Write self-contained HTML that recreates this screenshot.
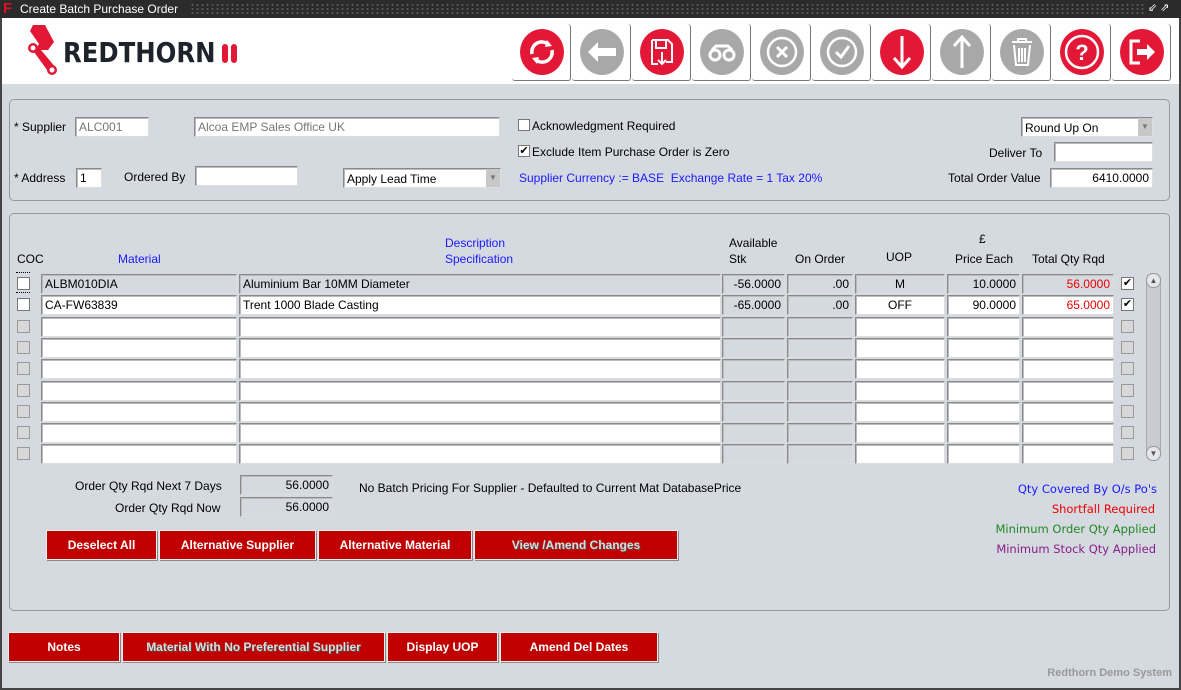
<!DOCTYPE html>
<html><head><meta charset="utf-8"><style>
*{box-sizing:border-box;margin:0;padding:0}
body{width:1181px;height:690px;overflow:hidden;background:#d5d9e0;font-family:"Liberation Sans",Arial,sans-serif;font-size:12px;color:#000;position:relative}
.a{position:absolute}
.f{position:absolute;height:20px;border:1px solid #8a8a8a;border-right-color:#ddd;border-bottom-color:#ddd;box-shadow:inset 1px 1px 0 #bbb;background:#fff;padding:2px 3px;white-space:nowrap;overflow:hidden;font-size:12px}
.g{background:#d5d9e0}
.r{text-align:right}
.c{text-align:center}
.lbl{position:absolute;font-size:12px;white-space:nowrap}
.blue{color:#1a1aff}
.cb{position:absolute;width:13px;height:13px;border:1px solid #777;background:#fff}
.cbg{background:#d8d8d8;border-color:#999}
.btn{position:absolute;height:30px;background:#c00000;color:#fff;font-weight:bold;font-size:12px;text-align:center;line-height:28px;border:1px solid #eee;box-shadow:1px 1px 0 #888}
.btn.s{color:#ddd;text-shadow:1px 1px 0 #555}
.panel{position:absolute;border:1px solid #999;border-radius:5px}
.tb{position:absolute;top:24px;width:59px;height:57px;border-right:1px solid #777;border-bottom:1px solid #777;border-radius:3px}
.tb svg{position:absolute;left:6px;top:4px}
.leg{font-family:"DejaVu Sans",sans-serif;font-size:11.5px}
</style></head><body>
<div class="a" style="left:0;top:0;width:1181px;height:18px;background:#2b2b2b"></div>
<div class="a" style="left:190px;top:3px;width:955px;height:12px;background-image:radial-gradient(#777 0.8px,transparent 1px);background-size:5px 4px"></div>
<div class="lbl" style="left:3px;top:0;color:#e0102a;font-size:15px;font-weight:bold;line-height:18px">F</div>
<div class="lbl" style="left:20px;top:2px;color:#fff;font-size:12px">Create Batch Purchase Order</div>
<div class="lbl" style="left:1148px;top:1px;color:#fff;font-size:11px">⇙ ⇗</div>
<div class="a" style="left:0;top:18px;width:2px;height:672px;background:#444"></div>
<div class="a" style="left:1179px;top:18px;width:2px;height:672px;background:#444"></div>
<div class="a" style="left:0;top:688px;width:1181px;height:2px;background:#444"></div>
<div class="a" style="left:2px;top:18px;width:1177px;height:66px;background:#fff"></div>
<svg class="a" style="left:26px;top:22px" width="40" height="56" viewBox="0 0 40 56"><path d="M7 3 L19 3 L28 20 L22 28 L15 28 L30 46 L24 52 L8 30 L13 22 L4 9Z" fill="#e31837"/><circle cx="7" cy="26" r="5" fill="#e31837"/><circle cx="7" cy="26" r="2.5" fill="#fff"/><circle cx="26" cy="48" r="5" fill="#e31837"/><circle cx="26" cy="48" r="2.5" fill="#fff"/></svg>
<div class="lbl" style="left:63px;top:36px;font-size:28px;font-weight:bold;color:#1e222a;font-family:'DejaVu Sans',sans-serif;transform:scaleX(0.87);transform-origin:left">REDTHORN</div>
<div class="a" style="left:222px;top:44px;width:6px;height:19px;background:#e31837;border-radius:3px"></div>
<div class="a" style="left:231px;top:44px;width:6px;height:19px;background:#e31837;border-radius:3px"></div>

<div class="tb" style="left:512px"><svg width="48" height="48" viewBox="0 0 48 48"><ellipse cx="24" cy="24" rx="22" ry="23" fill="#e31837"/><path d="M14 26a10 10 0 0 1 17-9M34 22a10 10 0 0 1-17 9" stroke="#fff" stroke-width="3.5" fill="none"/><path d="M29 12l5 6-7 1zM19 36l-5-6 7-1z" fill="#fff"/></svg></div>
<div class="tb" style="left:572px"><svg width="48" height="48" viewBox="0 0 48 48"><ellipse cx="24" cy="24" rx="22" ry="23" fill="#a8a8a8"/><path d="M10 24l10-10v6h18v8H20v6z" fill="#fff"/></svg></div>
<div class="tb" style="left:632px"><svg width="48" height="48" viewBox="0 0 48 48"><ellipse cx="24" cy="24" rx="22" ry="23" fill="#e31837"/><path d="M14 12h16l4 4v18h-6M20 36h-6V12M18 12v8h10v-8" stroke="#fff" stroke-width="2" fill="none"/><path d="M24 24v12M20 32l4 4 4-4" stroke="#fff" stroke-width="2" fill="none"/></svg></div>
<div class="tb" style="left:692px"><svg width="48" height="48" viewBox="0 0 48 48"><ellipse cx="24" cy="24" rx="22" ry="23" fill="#a8a8a8"/><circle cx="17" cy="27" r="5" stroke="#fff" stroke-width="3" fill="none"/><circle cx="31" cy="27" r="5" stroke="#fff" stroke-width="3" fill="none"/><path d="M14 22l4-4h12l4 4" stroke="#fff" stroke-width="3" fill="none"/></svg></div>
<div class="tb" style="left:752px"><svg width="48" height="48" viewBox="0 0 48 48"><ellipse cx="24" cy="24" rx="22" ry="23" fill="#a8a8a8"/><circle cx="24" cy="24" r="14" stroke="#fff" stroke-width="2.5" fill="none"/><path d="M19 19l10 10M29 19l-10 10" stroke="#fff" stroke-width="3"/></svg></div>
<div class="tb" style="left:812px"><svg width="48" height="48" viewBox="0 0 48 48"><ellipse cx="24" cy="24" rx="22" ry="23" fill="#a8a8a8"/><circle cx="24" cy="24" r="14" stroke="#fff" stroke-width="2.5" fill="none"/><path d="M18 24l5 5 8-11" stroke="#fff" stroke-width="3" fill="none"/></svg></div>
<div class="tb" style="left:872px"><svg width="48" height="48" viewBox="0 0 48 48"><ellipse cx="24" cy="24" rx="22" ry="23" fill="#e31837"/><path d="M24 8v30" stroke="#fff" stroke-width="3"/><path d="M16 30l8 9 8-9" stroke="#fff" stroke-width="3" fill="none"/></svg></div>
<div class="tb" style="left:932px"><svg width="48" height="48" viewBox="0 0 48 48"><ellipse cx="24" cy="24" rx="22" ry="23" fill="#a8a8a8"/><path d="M24 40V10" stroke="#fff" stroke-width="3"/><path d="M16 18l8-9 8 9" stroke="#fff" stroke-width="3" fill="none"/></svg></div>
<div class="tb" style="left:992px"><svg width="48" height="48" viewBox="0 0 48 48"><ellipse cx="24" cy="24" rx="22" ry="23" fill="#a8a8a8"/><path d="M14 14h20M20 14v-3h8v3M16 17l2 20h12l2-20M21 20v14M24 20v14M27 20v14" stroke="#fff" stroke-width="2" fill="none"/></svg></div>
<div class="tb" style="left:1052px"><svg width="48" height="48" viewBox="0 0 48 48"><ellipse cx="24" cy="24" rx="22" ry="23" fill="#e31837"/><circle cx="24" cy="24" r="16" stroke="#fff" stroke-width="2.5" fill="none"/><text x="24" y="32" font-size="22" font-weight="bold" fill="#fff" text-anchor="middle" font-family="Liberation Sans">?</text></svg></div>
<div class="tb" style="left:1112px"><svg width="48" height="48" viewBox="0 0 48 48"><ellipse cx="24" cy="24" rx="22" ry="23" fill="#e31837"/><path d="M22 13h-9v22h9" stroke="#fff" stroke-width="3" fill="none"/><path d="M19 21h10v-5l8 8-8 8v-5H19z" fill="#fff"/></svg></div>

<div class="panel" style="left:9px;top:99px;width:1161px;height:102px"></div>
<div class="lbl" style="left:14px;top:120px">* Supplier</div>
<div class="f" style="left:75px;top:117px;width:74px;color:#777">ALC001</div>
<div class="f" style="left:194px;top:117px;width:306px;color:#777">Alcoa EMP Sales Office UK</div>
<div class="lbl" style="left:14px;top:171px">* Address</div>
<div class="f" style="left:76px;top:168px;width:26px">1</div>
<div class="lbl" style="left:124px;top:170px">Ordered By</div>
<div class="f" style="left:195px;top:166px;width:103px"></div>
<div class="f" style="left:343px;top:168px;width:158px;padding-top:3px">Apply Lead Time<div class="a" style="right:0;top:0;width:14px;height:18px;background:#c8c8c8;font-size:8px;color:#777;text-align:center;line-height:18px">▼</div></div>
<div class="cb" style="left:518px;top:119px;width:12px;height:12px"></div>
<div class="lbl" style="left:532px;top:119px">Acknowledgment Required</div>
<div class="cb" style="left:518px;top:145px;width:12px;height:12px;font-size:11px;line-height:10px;text-align:center">✔</div>
<div class="lbl" style="left:532px;top:145px">Exclude Item Purchase Order is Zero</div>
<div class="lbl blue" style="left:519px;top:171px">Supplier Currency := BASE&nbsp;&nbsp;Exchange Rate = 1 Tax 20%</div>
<div class="f" style="left:1021px;top:117px;width:132px;padding-top:3px">Round Up On<div class="a" style="right:0;top:0;width:14px;height:18px;background:#c8c8c8;font-size:8px;color:#777;text-align:center;line-height:18px">▼</div></div>
<div class="lbl" style="left:989px;top:146px">Deliver To</div>
<div class="f" style="left:1054px;top:142px;width:99px"></div>
<div class="lbl" style="left:948px;top:171px">Total Order Value</div>
<div class="f r" style="left:1050px;top:168px;width:103px">6410.0000</div>

<div class="panel" style="left:9px;top:213px;width:1161px;height:398px"></div>
<div class="lbl" style="left:17px;top:252px">COC</div>
<div class="lbl blue" style="left:118px;top:252px">Material</div>
<div class="lbl blue" style="left:445px;top:236px">Description</div>
<div class="lbl blue" style="left:445px;top:252px">Specification</div>
<div class="lbl" style="left:729px;top:236px">Available</div>
<div class="lbl" style="left:729px;top:252px">Stk</div>
<div class="lbl" style="left:795px;top:252px">On Order</div>
<div class="lbl" style="left:886px;top:250px">UOP</div>
<div class="lbl" style="left:979px;top:232px">£</div>
<div class="lbl" style="left:955px;top:252px">Price Each</div>
<div class="lbl" style="left:1032px;top:252px">Total Qty Rqd</div>

<div class="a" style="left:16px;top:272px;width:14px;border-top:1px dotted #000"></div>
<div class="a" style="left:16px;top:292px;width:14px;border-top:1px dotted #000"></div>

<div class="cb" style="left:17px;top:277px"></div>
<div class="f g" style="left:41px;top:274px;width:196px">ALBM010DIA</div>
<div class="f g" style="left:239px;top:274px;width:482px">Aluminium Bar 10MM Diameter</div>
<div class="f g r" style="left:722px;top:274px;width:63px">-56.0000</div>
<div class="f g r" style="left:787px;top:274px;width:66px">.00</div>
<div class="f g c" style="left:855px;top:274px;width:90px">M</div>
<div class="f g r" style="left:947px;top:274px;width:73px">10.0000</div>
<div class="f g r" style="left:1022px;top:274px;width:92px;color:#e00">56.0000</div>
<div class="cb" style="left:1121px;top:277px;font-size:11px;line-height:11px;text-align:center">✔</div>

<div class="cb" style="left:17px;top:298px"></div>
<div class="f" style="left:41px;top:295px;width:196px">CA-FW63839</div>
<div class="f" style="left:239px;top:295px;width:482px">Trent 1000 Blade Casting</div>
<div class="f g r" style="left:722px;top:295px;width:63px">-65.0000</div>
<div class="f g r" style="left:787px;top:295px;width:66px">.00</div>
<div class="f c" style="left:855px;top:295px;width:90px">OFF</div>
<div class="f r" style="left:947px;top:295px;width:73px">90.0000</div>
<div class="f r" style="left:1022px;top:295px;width:92px;color:#e00">65.0000</div>
<div class="cb" style="left:1121px;top:298px;font-size:11px;line-height:11px;text-align:center">✔</div>

<div class="cb cbg" style="left:17px;top:320px"></div><div class="f" style="left:41px;top:317px;width:196px"></div><div class="f" style="left:239px;top:317px;width:482px"></div><div class="f g" style="left:722px;top:317px;width:63px"></div><div class="f g" style="left:787px;top:317px;width:66px"></div><div class="f" style="left:855px;top:317px;width:90px"></div><div class="f" style="left:947px;top:317px;width:73px"></div><div class="f" style="left:1022px;top:317px;width:92px"></div><div class="cb cbg" style="left:1121px;top:320px"></div>
<div class="cb cbg" style="left:17px;top:341px"></div><div class="f" style="left:41px;top:338px;width:196px"></div><div class="f" style="left:239px;top:338px;width:482px"></div><div class="f g" style="left:722px;top:338px;width:63px"></div><div class="f g" style="left:787px;top:338px;width:66px"></div><div class="f" style="left:855px;top:338px;width:90px"></div><div class="f" style="left:947px;top:338px;width:73px"></div><div class="f" style="left:1022px;top:338px;width:92px"></div><div class="cb cbg" style="left:1121px;top:341px"></div>
<div class="cb cbg" style="left:17px;top:362px"></div><div class="f" style="left:41px;top:359px;width:196px"></div><div class="f" style="left:239px;top:359px;width:482px"></div><div class="f g" style="left:722px;top:359px;width:63px"></div><div class="f g" style="left:787px;top:359px;width:66px"></div><div class="f" style="left:855px;top:359px;width:90px"></div><div class="f" style="left:947px;top:359px;width:73px"></div><div class="f" style="left:1022px;top:359px;width:92px"></div><div class="cb cbg" style="left:1121px;top:362px"></div>
<div class="cb cbg" style="left:17px;top:384px"></div><div class="f" style="left:41px;top:381px;width:196px"></div><div class="f" style="left:239px;top:381px;width:482px"></div><div class="f g" style="left:722px;top:381px;width:63px"></div><div class="f g" style="left:787px;top:381px;width:66px"></div><div class="f" style="left:855px;top:381px;width:90px"></div><div class="f" style="left:947px;top:381px;width:73px"></div><div class="f" style="left:1022px;top:381px;width:92px"></div><div class="cb cbg" style="left:1121px;top:384px"></div>
<div class="cb cbg" style="left:17px;top:405px"></div><div class="f" style="left:41px;top:402px;width:196px"></div><div class="f" style="left:239px;top:402px;width:482px"></div><div class="f g" style="left:722px;top:402px;width:63px"></div><div class="f g" style="left:787px;top:402px;width:66px"></div><div class="f" style="left:855px;top:402px;width:90px"></div><div class="f" style="left:947px;top:402px;width:73px"></div><div class="f" style="left:1022px;top:402px;width:92px"></div><div class="cb cbg" style="left:1121px;top:405px"></div>
<div class="cb cbg" style="left:17px;top:426px"></div><div class="f" style="left:41px;top:423px;width:196px"></div><div class="f" style="left:239px;top:423px;width:482px"></div><div class="f g" style="left:722px;top:423px;width:63px"></div><div class="f g" style="left:787px;top:423px;width:66px"></div><div class="f" style="left:855px;top:423px;width:90px"></div><div class="f" style="left:947px;top:423px;width:73px"></div><div class="f" style="left:1022px;top:423px;width:92px"></div><div class="cb cbg" style="left:1121px;top:426px"></div>
<div class="cb cbg" style="left:17px;top:447px"></div><div class="f" style="left:41px;top:444px;width:196px"></div><div class="f" style="left:239px;top:444px;width:482px"></div><div class="f g" style="left:722px;top:444px;width:63px"></div><div class="f g" style="left:787px;top:444px;width:66px"></div><div class="f" style="left:855px;top:444px;width:90px"></div><div class="f" style="left:947px;top:444px;width:73px"></div><div class="f" style="left:1022px;top:444px;width:92px"></div><div class="cb cbg" style="left:1121px;top:447px"></div>

<div class="a" style="left:1146px;top:273px;width:15px;height:188px;background:#c8ccd2;border:1px solid #aaa;border-radius:7px"></div>
<div class="a" style="left:1146px;top:273px;width:15px;height:15px;background:#e4e6ea;border:1px solid #999;border-radius:7px;font-size:8px;text-align:center;line-height:13px;color:#555">▲</div>
<div class="a" style="left:1146px;top:446px;width:15px;height:15px;background:#e4e6ea;border:1px solid #999;border-radius:7px;font-size:8px;text-align:center;line-height:13px;color:#555">▼</div>

<div class="lbl" style="left:75px;top:479px">Order Qty Rqd Next 7 Days</div>
<div class="f g r" style="left:240px;top:475px;width:93px">56.0000</div>
<div class="lbl" style="left:115px;top:501px">Order Qty Rqd Now</div>
<div class="f g r" style="left:240px;top:497px;width:93px">56.0000</div>
<div class="lbl" style="left:359px;top:481px">No Batch Pricing For Supplier - Defaulted to Current Mat DatabasePrice</div>
<div class="lbl leg" style="right:24px;top:482px;color:#1a1aff">Qty Covered By O/s Po's</div>
<div class="lbl leg" style="right:26px;top:502px;color:#e00">Shortfall Required</div>
<div class="lbl leg" style="right:25px;top:522px;color:#228822">Minimum Order Qty Applied</div>
<div class="lbl leg" style="right:25px;top:542px;color:#881f88">Minimum Stock Qty Applied</div>

<div class="btn" style="left:46px;top:530px;width:111px">Deselect All</div>
<div class="btn" style="left:159px;top:530px;width:157px">Alternative Supplier</div>
<div class="btn" style="left:318px;top:530px;width:154px">Alternative Material</div>
<div class="btn s" style="left:474px;top:530px;width:204px">View /Amend Changes</div>

<div class="btn" style="left:8px;top:632px;width:112px">Notes</div>
<div class="btn s" style="left:122px;top:632px;width:263px">Material With No Preferential Supplier</div>
<div class="btn" style="left:387px;top:632px;width:111px">Display UOP</div>
<div class="btn" style="left:500px;top:632px;width:158px">Amend Del Dates</div>
<div class="lbl" style="right:9px;top:667px;color:#999;font-weight:bold;font-size:11px">Redthorn Demo System</div>
</body></html>
